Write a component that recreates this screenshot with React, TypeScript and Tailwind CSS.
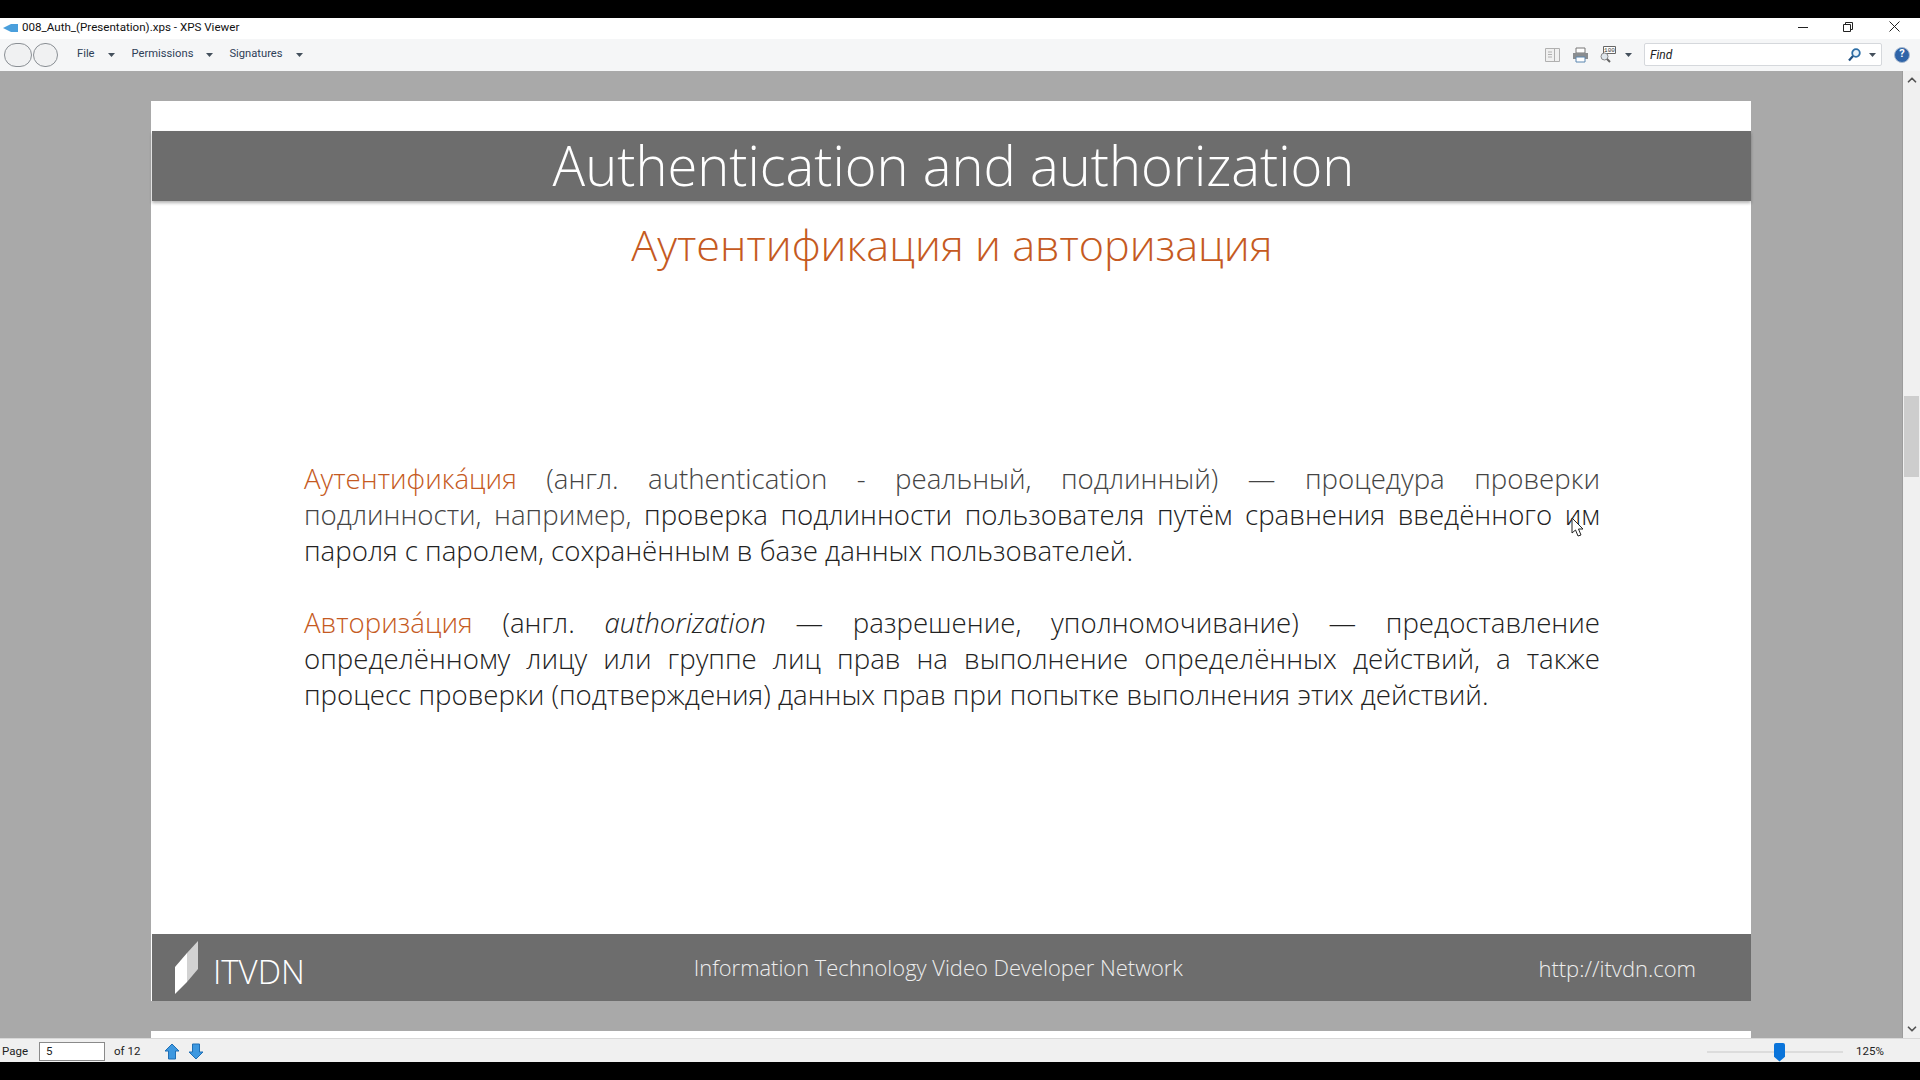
import type { ReactNode } from "react";
import { ChevronUp, ChevronDown } from "lucide-react";

const Caret = ({ className = "" }: { className?: string }) => (
    <svg width="7" height="4" viewBox="0 0 7 4" className={className}>
        <path d="M0 0H7L3.500 4Z" fill="#44505c" />
    </svg>
);

const PageArrow = ({ up }: { up?: boolean }) => (
    <svg width="16" height="17" viewBox="0 0 16 17" className={up ? "" : "rotate-180"}>
        <path d="M8 1L15 8H11.500V16H4.500V8H1Z" fill="#3d98e0" stroke="#1f6fb5" strokeWidth="1" />
    </svg>
);

const Justified = ({ children }: { children: ReactNode }) => (
    <div className="text-justify [text-align-last:justify] whitespace-nowrap">{children}</div>
);

const App = () => {
    return (
        <div className="flex flex-col w-[1920px] h-[1080px] bg-black overflow-hidden font-['Open_Sans','Noto_Sans',sans-serif]">
            <div className="h-[18px] shrink-0" />
            <div className="flex items-center h-[21px] pb-[1px] bg-white text-[11.600px] text-[#111] shrink-0">
                <svg width="16" height="10" viewBox="0 0 16 10" className="ml-[3px] mr-[3px]">
                    <path d="M0 5L8 1H15V9H8Z" fill="#4a9fdc" />
                </svg>
                <span className="font-['Roboto',sans-serif]">008_Auth_(Presentation).xps - XPS Viewer</span>
                <div className="flex items-center ml-auto mb-[3px]">
                    <svg width="10" height="10" viewBox="0 0 10 10" className="mr-[35px]">
                        <path d="M0 5.500H10" stroke="#222" />
                    </svg>
                    <svg width="10" height="10" viewBox="0 0 10 10" className="mr-[36px]">
                        <path d="M.5 2.500H7.500V9.500H.5ZM2.500 2.500V.5H9.500V7.500H7.500" fill="none" stroke="#222" />
                    </svg>
                    <svg width="11" height="11" viewBox="0 0 11 11" className="mr-[20px]">
                        <path d="M.5.5L10.500 10.500M10.500.5L.5 10.500" stroke="#222" />
                    </svg>
                </div>
            </div>
            <div className="flex items-center h-[32px] pb-[1px] bg-[#f5f6f7] text-[11.200px] text-[#2e4057] shrink-0 font-['Roboto',sans-serif]">
                <div className="flex items-center ml-[4px] mr-[19px]">
                    <div className="w-[28px] h-[24px] rounded-full border border-[#8a8f94] bg-[#f0f1f2]" />
                    <div className="w-[25px] h-[24px] ml-[1px] rounded-full border border-[#8a8f94] bg-[#f0f1f2]" />
                </div>
                <span>File</span>
                <Caret className="ml-[13px]" />
                <span className="ml-[17px]">Permissions</span>
                <Caret className="ml-[13px]" />
                <span className="ml-[16px]">Signatures</span>
                <Caret className="ml-[13px]" />
                <div className="flex items-center ml-auto">
                    <svg width="15" height="14" viewBox="0 0 15 14" className="mr-[12px]">
                        <path d="M.5.5H14.500V13.500H.5ZM9.500.5V13.500M3 4H7M3 6.500H7M3 9H7" fill="#f0f0f0" stroke="#b0b0b0" />
                    </svg>
                    <svg width="17" height="16" viewBox="0 0 17 16" className="mr-[11px]">
                        <path d="M4 1H13V6H4Z" fill="#fff" stroke="#777" />
                        <path d="M1 6H16V12H1Z" fill="#8a8d90" />
                        <path d="M4 10H13V15H4Z" fill="#fff" stroke="#5b86b0" />
                    </svg>
                    <svg width="16" height="17" viewBox="0 0 16 17">
                        <path d="M3.500.5H15.500V7.500H3.500Z" fill="#fff" stroke="#666" />
                        <text x="9.500" y="6.300" fontSize="6" textAnchor="middle" fill="#333" fontFamily="Liberation Mono, monospace">100</text>
                        <circle cx="4.500" cy="10.500" r="3.500" fill="#dfe6ec" stroke="#888" />
                        <path d="M7 13L10 16" stroke="#666" strokeWidth="2" />
                    </svg>
                    <Caret className="ml-[9px]" />
                    <div className="flex items-center w-[238px] h-[23px] ml-[12px] pl-[5px] pr-[2px] bg-white border border-[#d5d8dc] rounded-[2px]">
                        <span className="text-[12px] text-[#222] italic">Find</span>
                        <svg width="13" height="14" viewBox="0 0 13 14" className="ml-auto">
                            <circle cx="8" cy="5" r="3.800" fill="#e8f2fa" stroke="#2d6ea6" strokeWidth="1.800" />
                            <path d="M5 8L1 12.500" stroke="#1f4f80" strokeWidth="2.200" />
                        </svg>
                        <Caret className="ml-[8px] mr-[3px]" />
                    </div>
                    <div className="flex items-center justify-center w-[16px] h-[16px] ml-[12px] mr-[10px] rounded-full bg-[#2f64a8] border border-[#a9bad0] text-white text-[11px] font-bold">
                        ?
                    </div>
                </div>
            </div>
            <div className="flex flex-1 min-h-0">
                <div className="relative flex-1 bg-[#a9a9a9] overflow-hidden border-r border-r-[#9c9c9c]">
                    <div className="flex flex-col w-[1600px] h-[900px] mt-[30px] ml-[151px] bg-white">
                        <div className="h-[30px] shrink-0" />
                        <div className="flex items-center justify-center h-[70px] ml-px pl-[4px] bg-[#6d6d6d] shadow-[0_2px_3px_rgba(0,0,0,0.3)] text-[54.300px] font-light text-white">
                            Authentication and authorization
                        </div>
                        <div className="mt-[14px] pl-[2px] text-center text-[43.200px] leading-[60px] font-light text-[#c55a22]">
                            Аутентификация и авторизация
                        </div>
                        <div className="w-[1296px] ml-[153px] mt-[185px] text-[27.650px] leading-[36px] font-light text-[#222]">
                            <Justified>
                                <span className="text-[#c55a22]">Аутентифика́ция</span> <span className="text-[#444]">(англ. authentication - реальный, подлинный) — процедура проверки</span>
                            </Justified>
                            <Justified>
                                <span className="text-[#444]">подлинности, например,</span> проверка подлинности пользователя путём сравнения введённого им
                            </Justified>
                            <div>пароля с паролем, сохранённым в базе данных пользователей.</div>
                            <div className="mt-[36px]">
                                <Justified>
                                    <span className="text-[#c55a22]">Авториза́ция</span> (англ. <i>authorization</i> — разрешение, уполномочивание) — предоставление
                                </Justified>
                                <Justified>
                                    определённому лицу или группе лиц прав на выполнение определённых действий, а также
                                </Justified>
                                <div>процесс проверки (подтверждения) данных прав при попытке выполнения этих действий.</div>
                            </div>
                        </div>
                        <div className="flex items-center h-[67px] mt-auto ml-px pl-[23px] bg-[#6d6d6d] text-white font-light">
                            <svg width="24" height="54" viewBox="0 0 24 54" className="shrink-0">
                                <path d="M0 26L12 12V41L0 53Z" fill="#fff" />
                                <path d="M12 12L23 0V28L12 41Z" fill="#d2d2d2" />
                            </svg>
                            <span className="ml-[14px] mt-[7px] text-[33px] leading-none">ITVDN</span>
                            <span className="ml-[389px] mt-[2px] text-[21.900px] text-[#eee]">Information Technology Video Developer Network</span>
                            <span className="ml-auto mr-[55px] mt-[2px] text-[22px] text-[#eee]">http://itvdn.com</span>
                        </div>
                    </div>
                    <div className="h-[100px] mt-[30px] ml-[151px] w-[1600px] bg-white" />
                    <svg width="14" height="21" viewBox="0 0 14 21" className="absolute left-[1571px] top-[446px]">
                        <path d="M1 1V16L4.500 13L7 19L10 18L7.500 12H12Z" fill="#fff" stroke="#222" strokeWidth="1" />
                    </svg>
                </div>
                <div className="flex flex-col items-center w-[17px] bg-[#f0f0f0] text-[#555] py-[2px]">
                    <ChevronUp size={14} strokeWidth={3} />
                    <div className="w-[15px] h-[81px] mt-[309px] bg-[#cdcdcd]" />
                    <ChevronDown size={14} strokeWidth={3} className="mt-auto" />
                </div>
            </div>
            <div className="flex items-center h-[24px] pt-[2px] bg-[#f0f0f0] border-t border-t-[#d8d8d8] text-[11.500px] text-[#222] shrink-0 font-['Roboto',sans-serif]">
                <span className="ml-[2px]">Page</span>
                <div className="flex items-center w-[66px] h-[19px] ml-[11px] pl-[6px] bg-white border border-[#8a8a8a]">5</div>
                <span className="ml-[9px]">of 12</span>
                <div className="flex items-center gap-[8px] ml-[24px]">
                    <PageArrow up />
                    <PageArrow />
                </div>
                <div className="relative w-[136px] h-[2px] ml-auto bg-[#dcdcdc]">
                    <div className="absolute left-[67px] -top-[8px] w-[11px] h-[19px] rounded-t-[2px] bg-[#0a74da] [clip-path:polygon(0_0,100%_0,100%_75%,50%_100%,0_75%)]" />
                </div>
                <span className="ml-[13px] mr-[34px] w-[30px]">125%</span>
            </div>
            <div className="h-[18px] shrink-0 bg-black" />
        </div>
    );
};

export default App;
